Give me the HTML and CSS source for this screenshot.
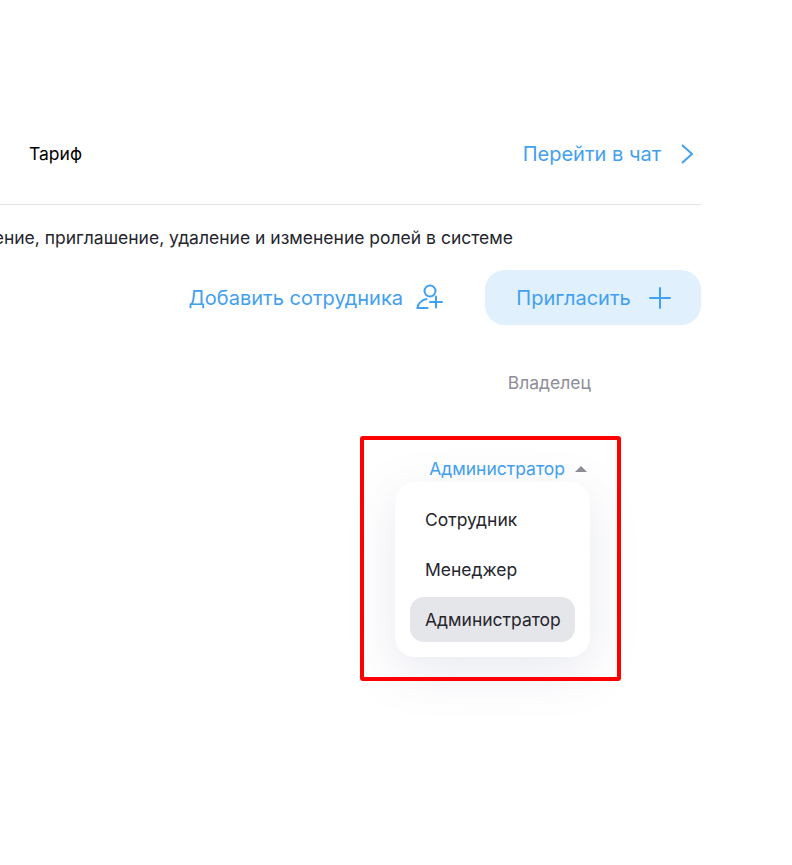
FILE: index.html
```html
<!DOCTYPE html>
<html lang="en">
<head>
    <meta charset="UTF-8">
    <meta name="viewport" content="width=device-width, initial-scale=1.0">
    <title>Сотрудники</title>
    <link rel="stylesheet" href="styles.css">
</head>
<body>

<div class="panel">
    <div class="header">
        <span class="tariff">Тариф</span>
        <a class="chat-link">
            <span>Перейти в чат</span>
            <svg class="chevron" width="14" height="22" viewBox="0 0 14 22" fill="none" stroke="currentColor" stroke-width="2">
                <path d="M2 2l10 9-10 9"/>
            </svg>
        </a>
    </div>

    <p class="description">Управление, приглашение, удаление и изменение ролей в системе</p>

    <div class="actions">
        <a class="add-link">
            <span>Добавить сотрудника</span>
            <svg width="28" height="28" viewBox="0 0 28 28" fill="none" stroke="currentColor" stroke-width="2" stroke-linecap="round">
                <circle cx="14" cy="7" r="5.500"/>
                <path d="M1.500 24c0-4 4-8 9-9"/>
                <path d="M1.500 24h10"/>
                <path d="M14 18h12M20 12.500v11"/>
            </svg>
        </a>
        <button class="invite">
            <span>Пригласить</span>
            <svg width="24" height="24" viewBox="0 0 24 24" fill="none" stroke="currentColor" stroke-width="2" stroke-linecap="round">
                <path d="M2 12h20M12 2v20"/>
            </svg>
        </button>
    </div>

    <div class="role-row role-owner">Владелец</div>

    <div class="role-row role-select">
        <span>Администратор</span>
        <span class="caret"></span>
        <div class="menu">
            <div class="menu-item">Сотрудник</div>
            <div class="menu-item">Менеджер</div>
            <div class="menu-item active">Администратор</div>
        </div>
    </div>
</div>

<div class="highlight"></div>

</body>
</html>
```

FILE: styles.css
```css
body {
    font-family: Inter, "Noto Sans", sans-serif;
    margin: 0;
    padding: 0;
    height: 865px;
    overflow: hidden;
    background-color: white;
    color: #25252d;
}
.panel {
    width: 701px;
    font-size: 17.5px;
}
.header {
    height: 205px;
    box-sizing: border-box;
    padding: 131px 7px 0 29px;
    display: flex;
    justify-content: space-between;
    align-items: flex-start;
    border-bottom: 1px solid #e4e4e7;
}
.tariff {
    line-height: 46px;
    color: #000;
}
.chat-link {
    display: flex;
    align-items: center;
    gap: 19px;
    height: 46px;
    font-size: 20px;
    color: #42a0f0;
}
.description {
    margin: 0;
    height: 65px;
    padding: 23px 188px 0 0;
    box-sizing: border-box;
    line-height: 20px;
    white-space: nowrap;
    display: flex;
    justify-content: flex-end;
}
.actions {
    display: flex;
    justify-content: flex-end;
    align-items: center;
    gap: 41px;
}
.add-link {
    display: flex;
    align-items: center;
    gap: 13px;
    font-size: 20px;
    color: #42a0f0;
}
.invite {
    display: flex;
    align-items: center;
    justify-content: center;
    gap: 17px;
    width: 216px;
    height: 55px;
    padding: 0 0 0 2px;
    border: none;
    border-radius: 20px;
    background-color: #e0f0fc;
    color: #42a0f0;
    font-family: inherit;
    font-size: 20px;
}
.role-row {
    display: flex;
    justify-content: flex-end;
    align-items: center;
    line-height: 20px;
}
.role-owner {
    margin-top: 48px;
    padding-right: 110px;
    color: #8e8e99;
}
.role-select {
    position: relative;
    margin-top: 66px;
    padding-right: 114px;
    gap: 10px;
    color: #42a0f0;
}
.caret {
    width: 0;
    height: 0;
    border-left: 6px solid transparent;
    border-right: 6px solid transparent;
    border-bottom: 6px solid #8e8e99;
}
.menu {
    position: absolute;
    top: 23px;
    left: 395px;
    width: 195px;
    box-sizing: border-box;
    padding: 15px;
    display: flex;
    flex-direction: column;
    gap: 5px;
    background-color: white;
    border-radius: 20px;
    box-shadow: 0 14px 50px rgba(115, 120, 160, 0.16);
    color: #25252d;
}
.menu-item {
    height: 45px;
    line-height: 45px;
    padding-left: 15px;
    border-radius: 14px;
}
.menu-item.active {
    background-color: #e5e6ea;
}
.highlight {
    position: absolute;
    top: 436px;
    left: 360px;
    width: 261px;
    height: 245px;
    box-sizing: border-box;
    border: 4px solid #ff0000;
    border-radius: 3px;
}
```
